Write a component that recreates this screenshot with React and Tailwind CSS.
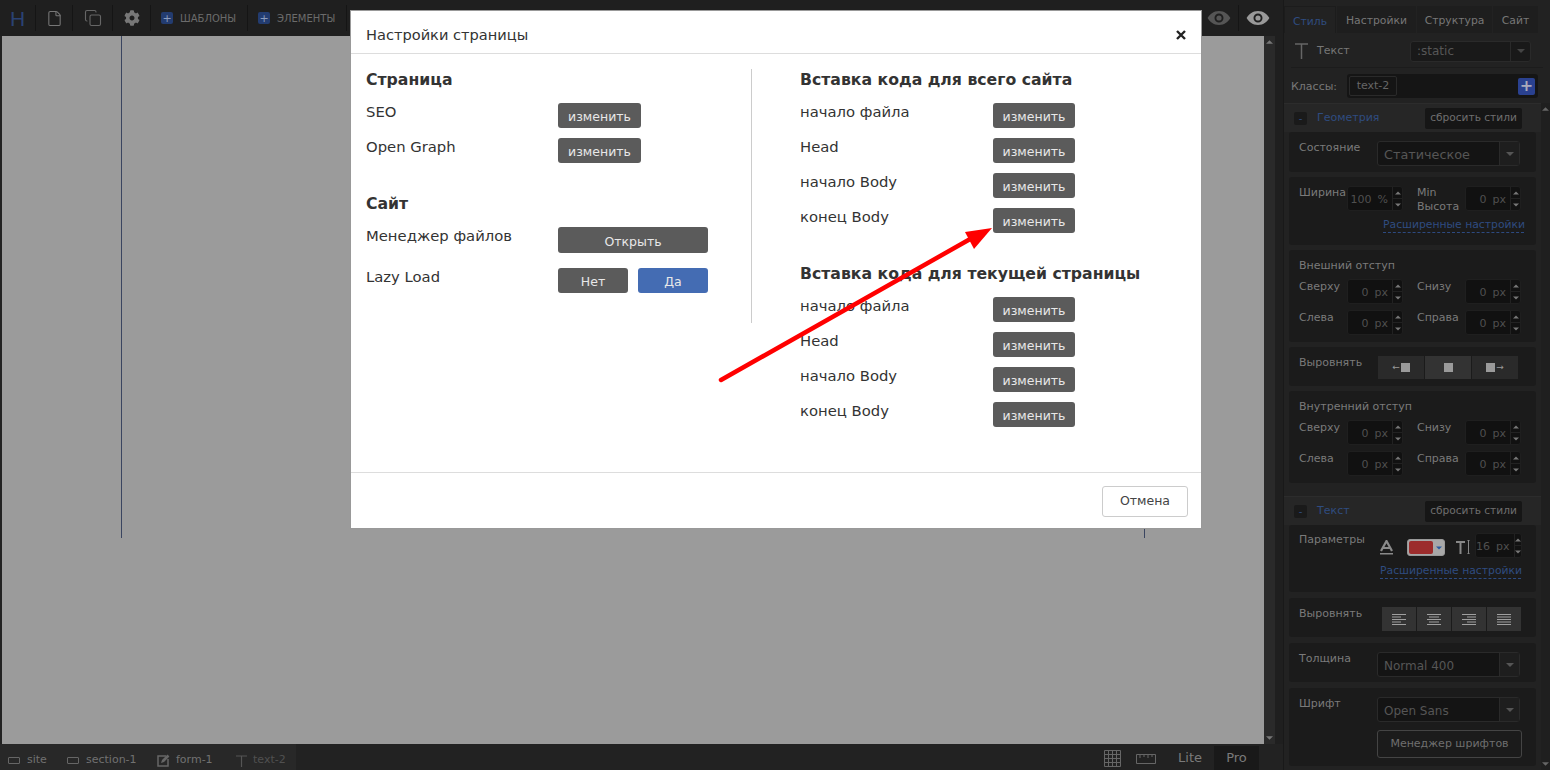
import React from "react";
import { File, Copy } from "lucide-react";
import { FaCog } from "react-icons/fa";

const Eye = ({ c }) => (
  <svg width="24" height="16" viewBox="0 0 24 16" className="block">
    <path fillRule="evenodd" fill={c} d="M12 1C6.5 1 2.5 4.6.6 8c1.9 3.4 5.9 7 11.4 7s9.5-3.6 11.4-7C21.500 4.600 17.500 1 12 1zm0 2.500a4.500 4.500 0 1 1 0 9 4.500 4.500 0 0 1 0-9z" />
    <circle cx="12" cy="8" r="2.600" fill={c} />
  </svg>
);

const Tri = ({ up, c = "#777", w = 7 }) => (
  <svg width={w} height="4" viewBox="0 0 8 4" className="block">
    <path d={up ? "M4 0L8 4H0z" : "M0 0H8L4 4z"} fill={c} />
  </svg>
);

const Plus = () => (
  <span className="flex h-[12px] w-[12px] items-center justify-center rounded-[2px] bg-[#233c70] text-[11px] leading-none text-[#8c9cbc]">+</span>
);

const Divider = () => <span className="h-[26px] w-px bg-[#151515]" />;

const Spin = ({ val = "0", unit = "px", w = "w-[56px]" }) => (
  <div className={`flex h-[25px] ${w} rounded-[3px] border border-[#1f1f1f] bg-[#111111]`}>
    <div className="flex flex-1 items-center justify-end gap-[6px] pr-[4px] pt-[4px] text-[11px] text-[#4f4f4f]">
      <span>{val}</span>
      <span>{unit}</span>
    </div>
    <div className="flex w-[10px] flex-col border-l border-[#222]">
      <span className="flex flex-1 items-center justify-center border-b border-[#222]"><Tri up w={6} /></span>
      <span className="flex flex-1 items-center justify-center"><Tri w={6} /></span>
    </div>
  </div>
);

const Select = ({ text, size = "text-[12px]" }) => (
  <div className="flex h-[25px] w-[143px] rounded-[3px] border border-[#2a2a2a] bg-[#141414]">
    <div className={`flex flex-1 items-center pl-[6px] pt-[2px] ${size} text-[#565656]`}>{text}</div>
    <div className="flex w-[20px] items-center justify-center border-l border-[#2a2a2a] bg-[#1e1e1e]"><Tri c="#555" w={8} /></div>
  </div>
);

const Card = ({ h, mb = "mb-[5px]", children }) => (
  <div className={`mx-[5px] ${mb} w-[247px] rounded-[3px] bg-[#1b1b1b] pl-[10px] ${h}`}>{children}</div>
);

const Label = ({ children, w = "w-[48px]" }) => (
  <span className={`${w} block shrink-0 text-[11px] leading-[14px] text-[#7a7a7a]`}>{children}</span>
);

const SpinRow = ({ a, b }) => (
  <div className="flex h-[31px] items-start">
    <Label w="w-[48px] pt-[1px]">{a}</Label>
    <Spin />
    <span className="w-[14px]" />
    <Label w="w-[48px] pt-[1px]">{b}</Label>
    <Spin />
  </div>
);

const SpacingCard = ({ title }) => (
  <Card h="h-[92px]">
    <div className="pt-[9px] text-[11px] leading-[14px] text-[#7a7a7a]">{title}</div>
    <div className="pt-[6px]">
      <SpinRow a="Сверху" b="Снизу" />
      <SpinRow a="Слева" b="Справа" />
    </div>
  </Card>
);

const AdvLink = () => (
  <span className="w-[141px] whitespace-nowrap border-b border-dashed border-[#2d4a80] text-center text-[10.8px] leading-[14px] text-[#2f4c80]">Расширенные настройки</span>
);

const SectionHead = ({ title }) => (
  <div className="flex h-[29px] items-center border-t border-[#2c2c2c] bg-[#262626] pl-[10px]">
    <span className="flex h-[13px] w-[13px] items-center justify-center rounded-[2px] bg-[#1a1a1a] text-[10px] text-[#2f4c80]">-</span>
    <span className="ml-[10px] w-[108px] pt-[1px] text-[11px] text-[#2f4c80]">{title}</span>
    <span className="flex h-[21px] w-[97px] items-center justify-center rounded-[2px] bg-[#161616] text-[10.6px] text-[#6f6f6f]">сбросить стили</span>
  </div>
);

const AlignIcon = ({ kind }) => {
  const lines = [
    [14, 9, 14, 9, 14],
    [14, 10, 14, 10, 14],
    [14, 9, 14, 9, 14],
    [14, 14, 14, 14, 14],
  ][kind];
  return (
    <svg width="14" height="13" viewBox="0 0 14 13" className="block">
      {lines.map((l, i) => {
        const x = kind === 0 || kind === 3 ? 0 : kind === 1 ? (14 - l) / 2 : 14 - l;
        return <rect key={i} x={x} y={1 + i * 2.500} width={l} height="1" fill="#a0a0a0" />;
      })}
    </svg>
  );
};

const Square = ({ dir }) => (
  <span className="flex items-center gap-[1px]">
    {dir === "l" && <span className="text-[9px] leading-none text-[#999]">←</span>}
    <span className="h-[9px] w-[9px] bg-[#9a9a9a]" />
    {dir === "r" && <span className="text-[9px] leading-none text-[#999]">→</span>}
  </span>
);

const Sidebar = () => (
  <aside className="flex h-full w-[267px] shrink-0 flex-col border-l border-[#191919] bg-[#222222] pt-[6px]">
    <div className="flex h-[27px] gap-px text-[10.8px] text-[#777]">
      <span className="flex w-[52px] items-center justify-center border-x border-t border-[#1c1c1c] pt-[4px] text-[#2f4c80]">Стиль</span>
      <span className="flex w-[79px] items-center justify-center bg-[#1e1e1e] pt-[4px]">Настройки</span>
      <span className="flex w-[75px] items-center justify-center bg-[#1e1e1e] pt-[4px]">Структура</span>
      <span className="flex w-[45px] items-center justify-center bg-[#1e1e1e] pt-[4px]">Сайт</span>
    </div>
    <div className="mx-[7px] flex h-[35px] items-center border-b border-[#1c1c1c] pl-[4px]">
      <svg width="13" height="16" viewBox="0 0 13 16" className="mt-[2px] block"><path d="M0 1H13M6.500 1V16" stroke="#666" strokeWidth="1.500" fill="none" /></svg>
      <span className="ml-[9px] w-[93px] pt-[3px] text-[11px] text-[#777]">Текст</span>
      <div className="mt-[2px] flex h-[21px] w-[121px] rounded-[3px] border border-[#2a2a2a] bg-[#191919]">
        <span className="flex flex-1 items-center pl-[6px] text-[12px] text-[#565656]">:static</span>
        <span className="flex w-[20px] items-center justify-center border-l border-[#2a2a2a]"><Tri c="#444" w={8} /></span>
      </div>
    </div>
    <div className="flex h-[35px] items-center pl-[7px]">
      <span className="w-[56px] pt-[3px] text-[11px] text-[#777]">Классы:</span>
      <div className="mt-[1px] flex h-[24px] w-[191px] items-center justify-between rounded-[3px] bg-[#151515] pl-[2px] pr-[3px]">
        <span className="flex h-[20px] w-[48px] items-center justify-center rounded-[2px] border border-[#2a2a2a] text-[11px] text-[#666]">text-2</span>
        <span className="flex h-[17px] w-[17px] items-center justify-center rounded-[2px] bg-[#2a4190] text-[16px] font-bold leading-none text-[#aab]">+</span>
      </div>
    </div>

    <div className="flex min-h-0 flex-1">
      <div className="w-[257px] overflow-hidden">
        <SectionHead title="Геометрия" />
        <Card h="h-[40px]">
          <div className="flex pt-[9px]">
            <Label w="w-[78px]">Состояние</Label>
            <Select text="Статическое" size="text-[12.8px]" />
          </div>
        </Card>
        <Card h="h-[68px]">
          <div className="flex h-[34px] pt-[9px]">
            <Label>Ширина</Label>
            <Spin val="100" unit="%" />
            <span className="w-[14px]" />
            <Label><span className="block">Min</span><span className="block">Высота</span></Label>
            <Spin />
          </div>
          <div className="flex justify-end pr-[12px] pt-[7px]"><AdvLink /></div>
        </Card>
        <SpacingCard title="Внешний отступ" />
        <Card h="h-[39px]">
          <div className="flex pt-[9px]">
            <Label w="w-[79px]">Выровнять</Label>
            <div className="flex h-[23px] w-[140px] gap-px">
              <span className="flex flex-1 items-center justify-center bg-[#2a2a2a]"><Square dir="l" /></span>
              <span className="flex flex-1 items-center justify-center bg-[#333]"><Square /></span>
              <span className="flex flex-1 items-center justify-center bg-[#2a2a2a]"><Square dir="r" /></span>
            </div>
          </div>
        </Card>
        <SpacingCard title="Внутренний отступ" />
        <div className="h-[8px]" />
        <SectionHead title="Текст" />
        <Card h="h-[67px]" mb="mb-[6px]">
          <div className="flex h-[33px] pt-[8px]">
            <Label w="w-[81px]">Параметры</Label>
            <div className="flex items-start">
              <svg width="13" height="16" viewBox="0 0 13 16" className="mt-[7px] block">
                <path d="M1 11L6.500 1L12 11M3.200 8H9.800" stroke="#8a8a8a" strokeWidth="2.200" fill="none" />
                <rect y="13" width="13" height="1.500" fill="#8a8a8a" />
              </svg>
              <div className="ml-[14px] mt-[6px] flex h-[17px] w-[38px] items-center rounded-[3px] border border-[#999] bg-[#a8a8a8] pl-px">
                <span className="h-[13px] w-[24px] rounded-[2px] bg-[#9c2c2c]" />
                <span className="flex flex-1 justify-center"><Tri c="#2a5aa0" w={6} /></span>
              </div>
              <svg width="14" height="14" viewBox="0 0 14 14" className="ml-[11px] mt-[7px] block">
                <path d="M0 2H9M4.500 2V14" stroke="#888" strokeWidth="2" fill="none" />
                <path d="M11 0H14M12.500 0V14M11 14H14" stroke="#888" strokeWidth="1" fill="none" />
              </svg>
              <div className="ml-[5px] mt-0"><Spin val="16" unit="px" w="w-[47px]" /></div>
            </div>
          </div>
          <div className="flex justify-end pr-[15px] pt-[6px]"><AdvLink /></div>
        </Card>
        <Card h="h-[39px]" mb="mb-[6px]">
          <div className="flex pt-[9px]">
            <Label w="w-[83px]">Выровнять</Label>
            <div className="flex h-[24px] w-[139px] gap-px">
              {[0, 1, 2, 3].map((k) => (
                <span key={k} className="flex flex-1 items-center justify-center bg-[#333]"><AlignIcon kind={k} /></span>
              ))}
            </div>
          </div>
        </Card>
        <Card h="h-[39px]" mb="mb-[6px]">
          <div className="flex pt-[9px]">
            <Label w="w-[78px]">Толщина</Label>
            <Select text="Normal 400" />
          </div>
        </Card>
        <Card h="h-[78px]">
          <div className="flex pt-[9px]">
            <Label w="w-[78px]">Шрифт</Label>
            <div>
              <Select text="Open Sans" />
              <div className="mt-[8px] flex h-[28px] w-[145px] items-center justify-center rounded-[3px] border border-[#444] text-[11px] text-[#6f6f6f]">Менеджер шрифтов</div>
            </div>
          </div>
        </Card>
      </div>
      <div className="flex w-[9px] flex-col justify-between bg-[#1f1f1f] py-[4px]">
        <span className="flex justify-center"><Tri up c="#666" /></span>
        <span className="flex justify-center"><Tri c="#666" /></span>
      </div>
    </div>
  </aside>
);

const Btn = ({ children, w = "w-[83px]", h = "h-[25px]", bg = "bg-[#5b5b5b]" }) => (
  <button className={`${w} ${h} ${bg} flex items-center justify-center rounded-[3px] pt-[4px] text-[12.5px] text-[#e8e8e8]`}>{children}</button>
);

const Row = ({ label, h = "h-[35px]", lw = "w-[193px]", children }) => (
  <div className={`flex ${h} items-start`}>
    <span className={`${lw} shrink-0 text-[14.8px] leading-[18px] text-[#333]`}>{label}</span>
    {children}
  </div>
);

const Head = ({ children, cls = "" }) => (
  <h3 className={`mb-[14px] h-[20px] whitespace-nowrap text-[15.7px] font-bold leading-[21px] text-[#333] ${cls}`}>{children}</h3>
);

const CodeRows = () =>
  ["начало файла", "Head", "начало Body", "конец Body"].map((t) => (
    <Row key={t} label={t}><Btn w="w-[82px]">изменить</Btn></Row>
  ));

const Modal = () => (
  <div className="absolute left-[350px] top-[10px] flex h-[519px] w-[852px] flex-col border border-[#999] bg-white">
    <div className="flex h-[43px] items-center justify-between border-b border-[#ddd] pl-[15px] pr-[15px]">
      <span className="pt-[6px] text-[14.6px] text-[#333]">Настройки страницы</span>
      <svg width="10" height="10" viewBox="0 0 10 10" className="mt-[6px] block"><path d="M1 1L9 9M9 1L1 9" stroke="#222" strokeWidth="2.400" /></svg>
    </div>
    <div className="flex h-[418px] items-start pl-[15px] pt-[15px]">
      <div className="h-[254px] w-[386px] border-r border-[#ccc]">
        <Head>Страница</Head>
        <Row lw="w-[192px]" label="SEO"><Btn>изменить</Btn></Row>
        <Row lw="w-[192px]" label="Open Graph"><Btn>изменить</Btn></Row>
        <Head cls="mt-[20px]">Сайт</Head>
        <Row lw="w-[192px]" label="Менеджер файлов" h="h-[41px]"><Btn w="w-[150px]" h="h-[26px]">Открыть</Btn></Row>
        <Row lw="w-[192px]" label="Lazy Load">
          <div className="flex gap-[10px]">
            <Btn w="w-[70px]">Нет</Btn>
            <Btn w="w-[70px]" bg="bg-[#446cb3]">Да</Btn>
          </div>
        </Row>
      </div>
      <div className="pl-[48px]">
        <Head>Вставка кода для всего сайта</Head>
        <CodeRows />
        <Head cls="mt-[20px]">Вставка кода для текущей страницы</Head>
        <CodeRows />
      </div>
    </div>
    <div className="flex flex-1 items-start justify-end border-t border-[#ddd] pr-[13px] pt-[13px]">
      <button className="flex h-[31px] w-[86px] items-center justify-center rounded-[3px] border border-[#ccc] text-[12.5px] text-[#444]">Отмена</button>
    </div>
  </div>
);

export default function App() {
  return (
    <div className="relative flex h-[770px] w-[1550px] overflow-hidden bg-[#232323] font-['DejaVu_Sans',sans-serif]">
      <div className="flex h-full w-[1283px] shrink-0 flex-col">
        <header className="flex h-[36px] items-center bg-[#1f1f1f]">
          <span className="flex w-[35px] justify-center font-['Liberation_Sans',sans-serif] text-[21px] leading-none text-[#2a4273]">H</span>
          <Divider />
          <span className="flex w-[36px] justify-center"><File size={17} strokeWidth={1.500} color="#777" /></span>
          <Divider />
          <span className="flex w-[39px] justify-center"><Copy size={18} strokeWidth={1.500} color="#666" /></span>
          <Divider />
          <span className="flex w-[37px] justify-center"><FaCog size={16} color="#777" /></span>
          <Divider />
          <span className="flex w-[96px] items-center gap-[7px] pl-[10px] text-[10px] text-[#6b6b6b]"><Plus />ШАБЛОНЫ</span>
          <Divider />
          <span className="flex w-[98px] items-center gap-[7px] pl-[10px] text-[10px] text-[#6b6b6b]"><Plus />ЭЛЕМЕНТЫ</span>
          <Divider />
          <span className="flex-1" />
          <Eye c="#555" />
          <span className="mx-[7px] h-[26px] w-px bg-[#151515]" />
          <Eye c="#999" />
          <span className="w-[13px]" />
        </header>
        <div className="flex min-h-0 flex-1">
          <div className="w-[2px] bg-[#222]" />
          <div className="w-[1262px] bg-[#9b9b9b]">
            <div className="ml-[119px] h-[502px] w-[1024px] border-x border-[#3a4560]" />
          </div>
          <div className="flex w-[11px] flex-col justify-between bg-[#2a2a2a] py-[4px]">
            <span className="flex justify-center"><Tri up c="#777" /></span>
            <span className="flex justify-center"><Tri c="#777" /></span>
          </div>
          <div className="w-[8px] bg-[#1f1f1f]" />
        </div>
        <footer className="flex h-[26px] items-center bg-[#222]">
          <div className="flex h-full w-[296px] items-center bg-[#282828] pl-[8px] pt-[7px] text-[11px] text-[#717171]">
            <span className="h-[7px] w-[12px] rounded-[1px] border border-[#666]" />
            <span className="ml-[7px] w-[40px]">site</span>
            <span className="h-[7px] w-[12px] rounded-[1px] border border-[#666]" />
            <span className="ml-[7px] w-[71px]">section-1</span>
            <svg width="13" height="13" viewBox="0 0 13 13" className="block">
              <path d="M9 2H1V12H11V5" stroke="#666" strokeWidth="1.500" fill="none" />
              <path d="M4 9L5 6L10.500 .6L12.400 2.500L7 8z" fill="#666" />
            </svg>
            <span className="ml-[6px] w-[60px]">form-1</span>
            <svg width="11" height="12" viewBox="0 0 11 12" className="block"><path d="M0 1H11M5.500 1V12" stroke="#555" strokeWidth="1.200" fill="none" /></svg>
            <span className="ml-[6px] text-[#505050]">text-2</span>
          </div>
          <span className="flex-1" />
          <svg width="17" height="17" viewBox="0 0 17 17" className="mt-[3px] block">
            <path d="M.5 .5H16.500V16.500H.5ZM4.500 .5V16.500M8.500 .5V16.500M12.500 .5V16.500M.5 4.500H16.500M.5 8.500H16.500M.5 12.500H16.500" stroke="#666" fill="none" />
          </svg>
          <svg width="20" height="10" viewBox="0 0 20 10" className="ml-[15px] mt-[3px] block">
            <path d="M.5 .5H19.500V9.500H.5ZM4 .5V4M8 .5V3M12 .5V4M16 .5V3" stroke="#666" fill="none" />
          </svg>
          <span className="ml-[22px] pt-[2px] text-[13px] text-[#7a7a7a]">Lite</span>
          <span className="ml-[12px] flex h-[24px] w-[45px] items-center justify-center self-end bg-[#191919] text-[13px] text-[#7a7a7a]">Pro</span>
          <span className="w-[24px]" />
        </footer>
      </div>
      <Sidebar />
      <Modal />
      <svg width="1550" height="770" viewBox="0 0 1550 770" className="pointer-events-none absolute left-0 top-0 block">
        <path d="M721 380L972 238" stroke="#ff0000" strokeWidth="4.500" strokeLinecap="round" />
        <polygon points="992,228 965,232 974,249" fill="#ff0000" />
      </svg>
    </div>
  );
}
